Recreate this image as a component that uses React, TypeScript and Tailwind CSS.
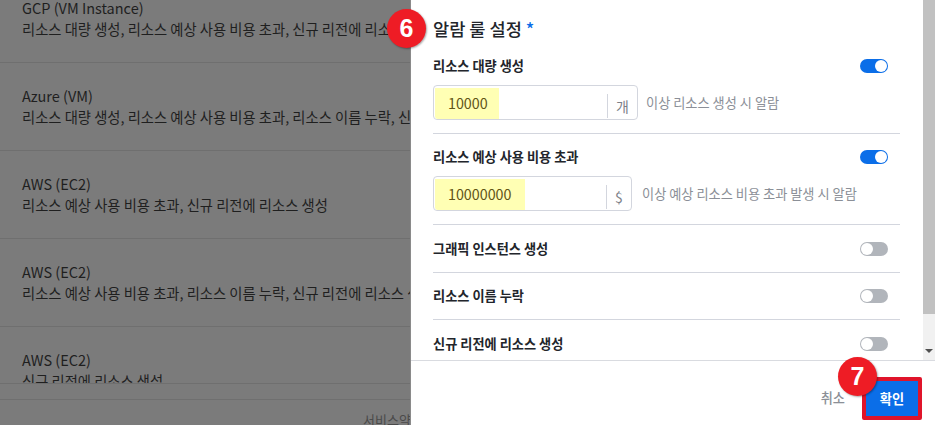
const FONT = "font-['Noto_Sans_CJK_KR','Noto_Sans',sans-serif]";

const rows = [
  { title: 'GCP (VM Instance)', desc: '리소스 대량 생성, 리소스 예상 사용 비용 초과, 신규 리전에 리소스 생성' },
  { title: 'Azure (VM)', desc: '리소스 대량 생성, 리소스 예상 사용 비용 초과, 리소스 이름 누락, 신규 리전에 리소스 생성' },
  { title: 'AWS (EC2)', desc: '리소스 예상 사용 비용 초과, 신규 리전에 리소스 생성' },
  { title: 'AWS (EC2)', desc: '리소스 예상 사용 비용 초과, 리소스 이름 누락, 신규 리전에 리소스 생성' },
  { title: 'AWS (EC2)', desc: '신규 리전에 리소스 생성' },
];

function Toggle({ on }: { on?: boolean }) {
  return (
    <div
      className={`flex h-[14px] w-[28px] rounded-full p-px ${
        on ? 'justify-end bg-[#0b6ee8]' : 'justify-start bg-[#b1b5bb]'
      }`}
    >
      <div className="h-[12px] w-[12px] rounded-full bg-white" />
    </div>
  );
}

function Badge({ n, className }: { n: number; className: string }) {
  return (
    <div
      className={`absolute flex h-[39px] w-[39px] items-center justify-center rounded-full bg-[#ee1c25] font-['Liberation_Sans',sans-serif] text-[25px] font-bold text-white shadow-[1px_1px_2px_rgba(0,0,0,0.35)] ${className}`}
    >
      {n}
    </div>
  );
}

function NumberField({
  value,
  unit,
  hint,
  fieldWidth,
  fillWidth,
  unitWidth,
  gap,
}: {
  value: string;
  unit: string;
  hint: string;
  fieldWidth: string;
  fillWidth: string;
  unitWidth: string;
  gap: string;
}) {
  return (
    <div className={`mt-[9px] flex items-center ${gap}`}>
      <div className={`flex h-[35px] items-end rounded-[4px] border border-[#d3d6de] ${fieldWidth}`}>
        <div className={`ml-px flex h-[31px] items-center rounded-bl-[3px] bg-[#ffffb4] pb-[2px] pl-[13px] text-[14.3px] text-[#5f5416] ${fillWidth}`}>
          {value}
        </div>
        <div className={`mb-px ml-auto flex h-[24px] items-center justify-center border-l border-[#d3d6de] text-[14px] text-[#7c8088] ${unitWidth}`}>
          {unit}
        </div>
      </div>
      <span className="text-[13.2px] text-[#8b8f97]">{hint}</span>
    </div>
  );
}

export default function App() {
  return (
    <div className={`relative flex h-[425px] w-[935px] overflow-hidden bg-white ${FONT}`}>
      {/* dimmed page behind the drawer */}
      <div className="flex h-full w-[410px] shrink-0 flex-col overflow-hidden bg-[#7b7b7b]">
        <div className="-mt-[25px] h-[409px] shrink-0 overflow-hidden border-b border-[#6f6f6f]">
          {rows.map((row, i) => (
            <div key={i} className="h-[88px] border-b border-[#6f6f6f] pl-[22px] pt-[23px]">
              <div className="whitespace-nowrap text-[14.5px] leading-[20px] text-[#1f1f1f]">{row.title}</div>
              <div className="mt-px whitespace-nowrap text-[14.3px] leading-[20px] text-[#1f1f1f]">{row.desc}</div>
            </div>
          ))}
        </div>
        <div className="h-[16px] shrink-0 border-b border-[#6f6f6f]" />
        <div className="pl-[363px] pt-[11px] whitespace-nowrap text-[13px] leading-[18px] text-[#4a4a4a]">서비스약관</div>
      </div>

      {/* drawer */}
      <div className="flex h-full flex-1 flex-col border-l border-[#8a8a8a]">
        <div className="flex h-[361px] shrink-0 border-b border-[#d9dbe0]">
          <div className="flex-1 overflow-hidden pl-[22px] pr-[23px]">
            <div className="mt-[17px] text-[17.6px] font-medium leading-[24px] text-[#22252b]">
              알람 룰 설정 <span className="text-[#0b6ee8]">*</span>
            </div>
            <div className="mt-[15px] border-b border-[#d3d6de] pb-[13px]">
              <div className="flex h-[20px] items-center justify-between pr-[12px]">
                <span className="text-[13.2px] font-bold text-[#22252b]">리소스 대량 생성</span>
                <Toggle on />
              </div>
              <NumberField value="10000" unit="개" hint="이상 리소스 생성 시 알람" fieldWidth="w-[205px]" fillWidth="w-[64px]" unitWidth="w-[30px]" gap="gap-[8px]" />
            </div>
            <div className="border-b border-[#d3d6de] pb-[13px] pt-[13px]">
              <div className="flex h-[20px] items-center justify-between pr-[12px]">
                <span className="text-[13.2px] font-bold text-[#22252b]">리소스 예상 사용 비용 초과</span>
                <Toggle on />
              </div>
              <NumberField value="10000000" unit="$" hint="이상 예상 리소스 비용 초과 발생 시 알람" fieldWidth="w-[199px]" fillWidth="w-[90px]" unitWidth="w-[25px]" gap="gap-[10px]" />
            </div>
            {['그래픽 인스턴스 생성', '리소스 이름 누락', '신규 리전에 리소스 생성'].map((label, i) => (
              <div key={label} className={`flex items-center justify-between pr-[12px] ${i === 0 ? 'h-[48px]' : 'h-[47px]'} ${i < 2 ? 'border-b border-[#d3d6de]' : ''}`}>
                <span className="text-[13.2px] font-bold text-[#22252b]">{label}</span>
                <Toggle />
              </div>
            ))}
          </div>
          {/* scrollbar */}
          <div className="relative w-[12px] shrink-0 bg-[#f1f1f1]">
            <div className="h-[314px] bg-[#c1c1c1]" />
            <div className="absolute bottom-[7px] left-[2px] h-0 w-0 border-x-[4px] border-t-[4px] border-x-transparent border-t-[#505050]" />
          </div>
        </div>
        <div className="flex flex-1 items-start justify-end pr-[13px] pt-[16px]">
          <span className="mr-[17px] mt-[11px] text-[13.2px] font-medium leading-[20px] text-[#8b8f97]">취소</span>
          <div className="flex h-[43px] w-[60px] items-center justify-center rounded-[2px] border-[4px] border-[#e0142a] bg-[#0b6ee8] text-[13.2px] font-bold text-white">
            확인
          </div>
        </div>
      </div>

      <Badge n={6} className="left-[387px] top-[9px]" />
      <Badge n={7} className="left-[838px] top-[357px]" />
    </div>
  );
}
